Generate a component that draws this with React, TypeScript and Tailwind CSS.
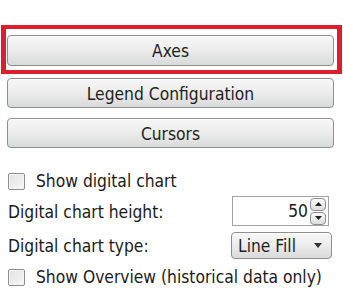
import React from "react";

// Shared look for the glossy gray push buttons
const btn =
  "flex items-center justify-center pt-[3px] rounded-[4px] border border-[#8e8f8f] bg-gradient-to-b from-[#f7f7f7] via-[#ececec] to-[#d9dadb] text-[#1e1e1e] shadow-[inset_0_1px_0_#ffffff]";

const Checkbox = (): JSX.Element => (
  <span className="block w-[17px] h-[17px] rounded-[2px] border border-[#8d8d8d] bg-gradient-to-br from-[#e2e2e2] to-[#f7f7f7] shadow-[inset_0_0_0_1px_#f4f4f4]" />
);

const App = (): JSX.Element => {
  return (
    <div
      className="w-[343px] h-[299px] bg-white overflow-hidden text-[17.3px] leading-none text-[#1a1a1a]"
      style={{ fontFamily: '"DejaVu Sans Condensed", "DejaVu Sans", sans-serif' }}
    >
      {/* highlighted first button */}
      <div className="pt-[25px] pl-[1px]">
        <div className="w-[341px] border-x-[5px] border-y-4 border-[#dc1f2b] pt-[6px] pb-[4px] pl-[1px]">
          <div className={`${btn} w-[327px] h-[31px]`}>Axes</div>
        </div>
      </div>

      <div className="pl-[7px] mt-[4px] flex flex-col gap-[10px]">
        <div className={`${btn} w-[327px] h-[30px]`}>Legend Configuration</div>
        <div className={`${btn} w-[327px] h-[30px]`}>Cursors</div>
      </div>

      <div className="pl-[8px] pr-[10px] mt-[25px] flex flex-col">
        <div className="flex items-center gap-[11px] h-[17px]">
          <Checkbox />
          <span className="pt-[1px]">Show digital chart</span>
        </div>

        <div className="flex items-center justify-between mt-[6px] h-[30px]">
          <span className="pt-[3px]">Digital chart height:</span>
          <div className="flex items-center w-[97px] h-[30px] mr-[4px] border border-[#a3a3a3] bg-white pl-2 pr-[2px]">
            <span className="flex-1 text-right pr-[2px] pt-[2px]">50</span>
            <div className="flex flex-col gap-[1px]">
              <div className="w-[16px] h-[13px] rounded-[4px] border border-[#8e8e8e] bg-gradient-to-b from-[#fafafa] to-[#dcdcdc] flex items-center justify-center">
                <svg width="7" height="4" viewBox="0 0 7 4"><path d="M0 4 L3.5 0 L7 4 Z" fill="#222" /></svg>
              </div>
              <div className="w-[16px] h-[13px] rounded-[4px] border border-[#8e8e8e] bg-gradient-to-b from-[#fafafa] to-[#dcdcdc] flex items-center justify-center">
                <svg width="7" height="4" viewBox="0 0 7 4"><path d="M0 0 L3.5 4 L7 0 Z" fill="#222" /></svg>
              </div>
            </div>
          </div>
        </div>

        <div className="flex items-center justify-between mt-[6px] h-[27px]">
          <span className="pt-[2px]">Digital chart type:</span>
          <div className={`${btn} !justify-start w-[101px] h-[27px] pl-[6px] pr-[9px] mr-[1px]`}>
            <span className="flex-1">Line Fill</span>
            <svg width="8" height="5" viewBox="0 0 8 5" className="-mt-[3px]"><path d="M0 0 L4 5 L8 0 Z" fill="#333" /></svg>
          </div>
        </div>

        <div className="flex items-center gap-[11px] h-[17px] mt-[10px]">
          <Checkbox />
          <span className="pt-[1px]">Show Overview (historical data only)</span>
        </div>
      </div>
    </div>
  );
};

export default App;
